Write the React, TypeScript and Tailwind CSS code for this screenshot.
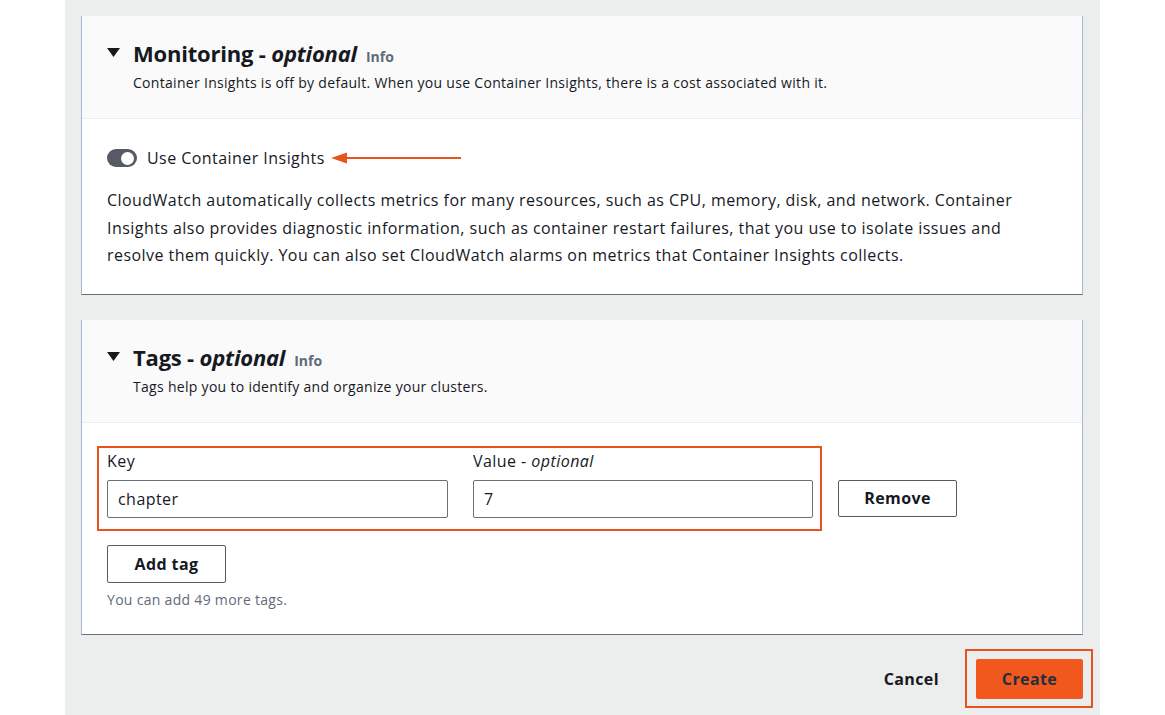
import React from "react";

const font = { fontFamily: '"Open Sans", "Noto Sans", Arial, sans-serif' };

function Caret() {
  return (
    <svg width="13" height="10" viewBox="0 0 13 10" className="shrink-0">
      <polygon points="0,0 13,0 6.5,9" fill="#16191f" />
    </svg>
  );
}

function Header({ title, sub }: { title: string; sub: string }) {
  return (
    <div className="bg-[#fafafa] border-b border-[#eaeded] pl-[25px] pr-[25px] pt-[22px] pb-[25px]">
      <div className="flex items-center h-[30px]">
        <Caret />
        <div className="ml-[13px] flex items-baseline">
          <span className="text-[22px] leading-[30px] font-bold text-[#16191f] tracking-[-0.2px]">
            {title} - <i className="font-bold">optional</i>
          </span>
          <span className="ml-[9px] text-[14px] font-bold text-[#5f6b7a]">Info</span>
        </div>
      </div>
      <div className="ml-[26px] mt-[5px] text-[14px] leading-[20px] tracking-[0.3px] text-[#16191f]">{sub}</div>
    </div>
  );
}

export default function App() {
  return (
    <div className="w-[1165px] h-[715px] bg-white flex overflow-hidden" style={font}>
      <div className="ml-[65px] w-[1035px] h-full bg-[#eceded] pl-[16px] pr-[17px] pt-[16px] flex flex-col">
        {/* Monitoring card */}
        <div className="bg-white border-l border-r border-b border-[#a7b7d1] border-b-[#687078]">
          <Header
            title="Monitoring"
            sub="Container Insights is off by default. When you use Container Insights, there is a cost associated with it."
          />
          <div className="pl-[25px] pr-[25px] pt-[27px] pb-[24px]">
            <div className="flex items-center h-[24px]">
              <div className="w-[30px] h-[18px] rounded-full bg-[#545b64] flex items-center justify-end pr-[3px]">
                <div className="w-[13px] h-[13px] rounded-full bg-white" />
              </div>
              <span className="ml-[10px] text-[16px] tracking-[0.45px] text-[#16191f]">Use Container Insights</span>
              <svg width="132" height="14" viewBox="0 0 132 14" className="ml-[6px]">
                <polygon points="0,7 16,1.5 16,12.5" fill="#e8541d" />
                <rect x="14" y="6" width="116" height="2" fill="#e8541d" />
              </svg>
            </div>
            <p className="mt-[17px] text-[16px] leading-[27.6px] tracking-[0.45px] text-[#16191f]">
              CloudWatch automatically collects metrics for many resources, such as CPU, memory, disk, and network. Container
              <br />
              Insights also provides diagnostic information, such as container restart failures, that you use to isolate issues and
              <br />
              resolve them quickly. You can also set CloudWatch alarms on metrics that Container Insights collects.
            </p>
          </div>
        </div>

        {/* Tags card */}
        <div className="mt-[25px] bg-white border-l border-r border-b border-[#a7b7d1] border-b-[#687078]">
          <Header title="Tags" sub="Tags help you to identify and organize your clusters." />
          <div className="pl-[25px] pr-[25px] pt-[27px] pb-[24px]">
            <div className="flex items-end">
              <div className="relative flex gap-[25px]">
                <div className="absolute left-[-10px] right-[-9px] top-[-4px] bottom-[-13px] border-2 border-[#e8541d] pointer-events-none" />
                <div className="w-[341px]">
                  <div className="text-[16px] leading-[22px] tracking-[0.45px] text-[#16191f]">Key</div>
                  <div className="mt-[8px] h-[38px] border border-[#687078] rounded-[2px] flex items-center px-[10px] text-[16px] tracking-[0.45px] text-[#16191f]">
                    chapter
                  </div>
                </div>
                <div className="w-[340px]">
                  <div className="text-[16px] leading-[22px] tracking-[0.45px] text-[#16191f]">
                    Value - <i>optional</i>
                  </div>
                  <div className="mt-[8px] h-[38px] border border-[#687078] rounded-[2px] flex items-center px-[10px] text-[16px] text-[#16191f]">
                    7
                  </div>
                </div>
              </div>
              <button className="ml-[25px] mb-[1px] w-[119px] h-[37px] border border-[#545b64] rounded-[2px] bg-white text-[16px] font-bold tracking-[0.4px] text-[#16191f]">
                Remove
              </button>
            </div>
            <button className="mt-[27px] w-[119px] h-[38px] border border-[#545b64] rounded-[2px] bg-white text-[16px] font-bold tracking-[0.4px] text-[#16191f]">
              Add tag
            </button>
            <div className="mt-[7px] text-[14px] leading-[20px] tracking-[0.3px] text-[#5f6b7a]">You can add 49 more tags.</div>
          </div>
        </div>

        {/* Footer */}
        <div className="mt-[24px] flex justify-end items-center">
          <span className="text-[16px] font-bold tracking-[0.4px] text-[#16191f] mr-[37px]">Cancel</span>
          <div className="relative">
            <div className="absolute left-[-11px] right-[-10px] top-[-10px] bottom-[-9px] border-2 border-[#e8541d]" />
            <button className="w-[107px] h-[40px] bg-[#f0581e] rounded-[2px] text-[16px] font-bold tracking-[0.4px] text-[#232f3e]">
              Create
            </button>
          </div>
        </div>
      </div>
    </div>
  );
}
